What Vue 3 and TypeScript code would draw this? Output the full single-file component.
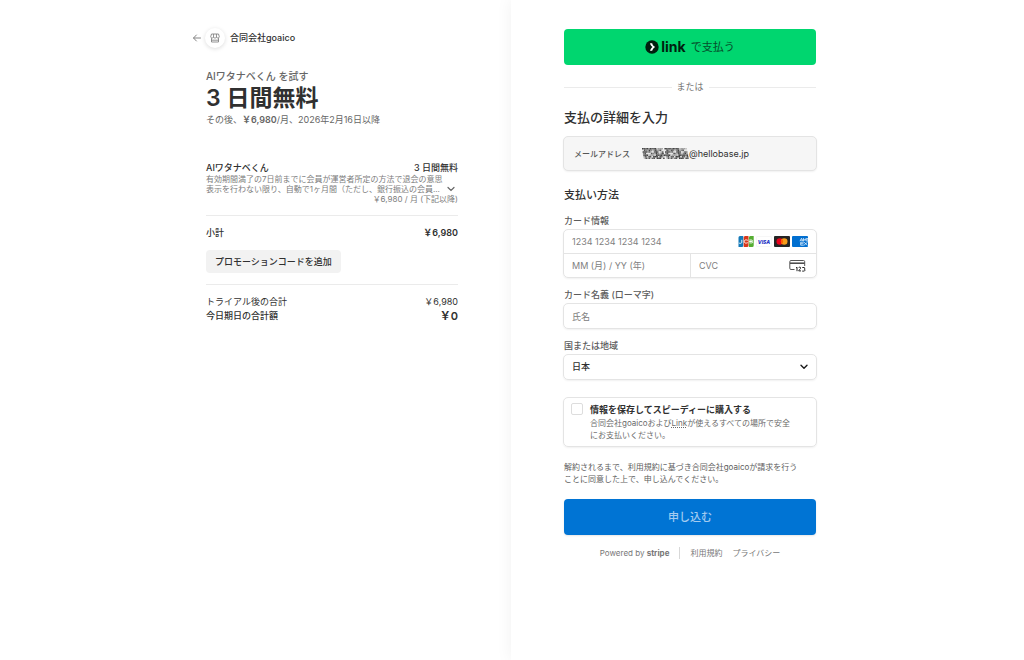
<script setup lang="ts">
import { ref } from 'vue'

const cardNumber = ref('')
const expiry = ref('')
const cvc = ref('')
const holder = ref('')
const country = ref('JP')
const saveInfo = ref(false)

interface Cell {
  x: number
  y: number
  fill: string
}

const shades = ['#444', '#888', '#c4c4c4', '#555', '#a2a2a2', '#e4e4e4', '#666']
const maskCells: Cell[] = []
for (let row = 0; row < 7; row++) {
  for (let col = 0; col < 28; col++) {
    if (col === 13 && row % 3 !== 1) continue
    const index = (col * col * 3 + row * 5 + col * row * 2 + (col >> 1)) % shades.length
    maskCells.push({ x: col * 1.6 + row * 0.3, y: row * 1.6, fill: shades[index] })
  }
}
</script>

<template>
  <main class="checkout">
    <section class="summary">
      <div class="column">
        <header class="merchant">
          <a href="#" class="back" aria-label="戻る">
            <svg width="8" height="8" viewBox="0 0 8 8" fill="none" stroke="#858585" stroke-linecap="round" stroke-linejoin="round">
              <path d="M7.5 4H.6M3.4 1 .5 4l2.9 3" />
            </svg>
          </a>
          <span class="avatar">
            <svg width="10" height="10" viewBox="0 0 10 10" fill="none" stroke="#777" stroke-width=".8">
              <path d="M1.500 1h7l.8 2.700c0 1.600-2.100 1.900-2.800.5-.6 1.200-2.400 1.200-3 0C2.800 5.600.7 5.300.7 3.700zM3.600 1l-.1 3.200M6.400 1l.1 3.200M1.500 5.200V9h7V5.200M1.500 7.200h7" />
            </svg>
          </span>
          <span class="merchant-name">合同会社goaico</span>
        </header>

        <div class="intro">
          <p class="product">AIワタナベくん を試す</p>
          <h1>3 日間無料</h1>
          <p class="after">その後、<b>￥6,980</b>/月、2026年2月16日以降</p>
        </div>

        <div class="item">
          <div class="line strong"><span>AIワタナベくん</span><span>3 日間無料</span></div>
          <div class="details">
            <p>有効期間満了の7日前までに会員が運営者所定の方法で退会の意思<br />表示を行わない限り、自動で1ヶ月間（ただし、銀行振込の会員...</p>
            <button type="button" class="expand" aria-label="詳細を表示">
              <svg width="8" height="6" viewBox="0 0 8 6" fill="none" stroke="#666" stroke-width="1.200" stroke-linecap="round"><path d="m1 1.500 3 3 3-3" /></svg>
            </button>
          </div>
          <p class="recurring">￥6,980 / 月 (下記以降)</p>
        </div>

        <div class="subtotal">
          <div class="line strong"><span>小計</span><span class="amount">￥6,980</span></div>
          <button type="button" class="promo">プロモーションコードを追加</button>
        </div>

        <div class="totals">
          <div class="line"><span>トライアル後の合計</span><span>￥6,980</span></div>
          <div class="line strong"><span>今日期日の合計額</span><span class="amount due">￥0</span></div>
        </div>
      </div>
    </section>

    <section class="payment">
      <form class="column" @submit.prevent>
        <button type="button" class="link-pay">
          <svg width="14" height="14" viewBox="0 0 14 14">
            <circle cx="7" cy="7" r="6.700" fill="#011e0f" />
            <path d="M5 3.200h2.200c.4 1.600 1.300 2.900 3 3.800-1.700.9-2.600 2.200-3 3.800H5c.4-1.600 1.300-2.900 2.500-3.800C6.300 6.100 5.400 4.800 5 3.200z" fill="#fff" />
          </svg>
          <span class="link-word">link</span>
          <span>で支払う</span>
        </button>

        <div class="or"><span>または</span></div>

        <h2>支払の詳細を入力</h2>
        <div class="email">
          <span class="email-label">メールアドレス</span>
          <span class="email-value">
            <svg width="47" height="11" viewBox="0 0 47 11" aria-hidden="true">
              <rect v-for="(cell, i) in maskCells" :key="i" :x="cell.x" :y="cell.y" width="1.7" height="1.7" :fill="cell.fill" />
            </svg>@hellobase.jp
          </span>
        </div>

        <h3>支払い方法</h3>

        <fieldset class="field">
          <legend class="label">カード情報</legend>
          <div class="control card">
            <div class="cell number">
              <input v-model="cardNumber" placeholder="1234 1234 1234 1234" aria-label="カード番号" />
              <div class="brands">
                <svg width="16" height="11" viewBox="0 0 16 11" role="img" aria-label="JCB">
                  <path d="M2 0h3.300v9.500A1.500 1.500 0 0 1 3.800 11H.5V1.500A1.500 1.500 0 0 1 2 0z" fill="#1479b8" />
                  <path d="M7.200 0h3.300v9.500A1.500 1.500 0 0 1 9 11H5.700V1.500A1.500 1.500 0 0 1 7.200 0z" fill="#d9361a" />
                  <path d="M12.400 0h3.300v9.500a1.500 1.500 0 0 1-1.500 1.500h-3.300V1.500A1.500 1.500 0 0 1 12.400 0z" fill="#55ad32" />
                  <path d="M3.800 3.800v2.500c0 1.200-1.700 1.300-3 .7M9.800 4.300c-1.800-.8-3.500-.5-3.500 1.200s1.700 2 3.500 1.200M11.300 4h2.200c1.200 0 1.200 1.400 0 1.400h-2.200 2.500c1.200 0 1.200 1.500 0 1.500h-2.500" fill="none" stroke="#fff" stroke-width=".9" />
                </svg>
                <svg width="16" height="11" viewBox="0 0 16 11" role="img" aria-label="Visa">
                  <rect x=".3" y=".3" width="15.400" height="10.400" rx="1.500" fill="#fff" stroke="#eee" stroke-width=".6" />
                  <text x="8" y="7.600" text-anchor="middle" class="visa">VISA</text>
                </svg>
                <svg width="16" height="11" viewBox="0 0 16 11" role="img" aria-label="Mastercard">
                  <rect width="16" height="11" rx="1" fill="#252525" />
                  <circle cx="5.800" cy="5.500" r="3.300" fill="#eb001b" />
                  <circle cx="10.200" cy="5.500" r="3.300" fill="#f79e1b" />
                  <path d="M8 3.040a3.300 3.300 0 0 1 0 4.920 3.300 3.300 0 0 1 0-4.920z" fill="#ff5f00" />
                </svg>
                <svg width="16" height="11" viewBox="0 0 16 11" role="img" aria-label="American Express">
                  <rect width="16" height="11" rx="1" fill="#016fd0" />
                  <path d="m8 5.200 1.500-3 1.500 3M8.600 4.200h1.900M11.500 5.200V2.400l1.300 2 1.300-2v2.800M11.800 6.200H8.700v3h3.100M8.700 7.700h2.800M12 6.200l3.500 3M15.500 6.200l-3.500 3M14.500 2.500H16M14.500 3.800H16M14.500 5H16" fill="none" stroke="#fff" stroke-width=".7" />
                </svg>
              </div>
            </div>
            <div class="split">
              <div class="cell">
                <input v-model="expiry" placeholder="MM (月) / YY (年)" aria-label="有効期限" />
              </div>
              <div class="cell cvc">
                <input v-model="cvc" placeholder="CVC" aria-label="セキュリティコード" />
                <svg width="17" height="12" viewBox="0 0 17 12" fill="none" aria-hidden="true">
                  <path d="M5.500 9.500H2A1.200 1.200 0 0 1 .8 8.300V1.700A1.200 1.200 0 0 1 2 .5h12.500a1.200 1.200 0 0 1 1.200 1.200v4.300" stroke="#555" />
                  <path d="M1 3.200h14.500" stroke="#444" stroke-width="1.500" />
                  <path d="m7 8 1-.8v4M9.700 7.800c.3-1 2-.9 2 .2 0 .8-1.800 1.800-2 2.900H12M13.300 7.500h1.900c.8 0 .8 1.600-.2 1.600 1.300 0 1.300 2-.1 2h-1.700" stroke="#222" />
                </svg>
              </div>
            </div>
          </div>
        </fieldset>

        <div class="field">
          <label class="label" for="holder">カード名義 (ローマ字)</label>
          <div class="control cell">
            <input id="holder" v-model="holder" placeholder="氏名" />
          </div>
        </div>

        <div class="field">
          <label class="label" for="country">国または地域</label>
          <div class="control cell country">
            <select id="country" v-model="country">
              <option value="JP">日本</option>
            </select>
            <svg width="8" height="6" viewBox="0 0 8 6" fill="none" stroke="#1a1a1a" stroke-width="1.400" stroke-linecap="round" stroke-linejoin="round" aria-hidden="true"><path d="m1 1.200 3 3 3-3" /></svg>
          </div>
        </div>

        <div class="control save">
          <input id="save" v-model="saveInfo" type="checkbox" />
          <div>
            <label for="save">情報を保存してスピーディーに購入する</label>
            <p>合同会社goaicoおよび<a href="#">Link</a>が使えるすべての場所で安全<br />にお支払いください。</p>
          </div>
        </div>

        <p class="terms">解約されるまで、利用規約に基づき合同会社goaicoが請求を行う<br />ことに同意した上で、申し込んでください。</p>

        <button type="submit" class="submit">申し込む</button>

        <footer>
          <a href="#" class="powered">Powered by <b>stripe</b></a>
          <a href="#">利用規約</a>
          <a href="#">プライバシー</a>
        </footer>
      </form>
    </section>
  </main>
</template>

<style>
body {
  margin: 0;
  background: #fff;
}
</style>

<style scoped>
.checkout {
  display: grid;
  grid-template-columns: 1fr 1fr;
  min-height: 100vh;
  overflow: hidden;
  font-family: Inter, "Noto Sans CJK JP", sans-serif;
  font-size: 9px;
  line-height: 14px;
  color: #303030;
}
p, h1, h2, h3, fieldset, legend {
  margin: 0;
  padding: 0;
  border: 0;
}
button, input, select {
  font: inherit;
  color: inherit;
  border: 0;
  padding: 0;
  margin: 0;
  background: none;
}
a {
  color: inherit;
  text-decoration: none;
}
svg {
  display: block;
  flex: none;
}
.column {
  width: 100%;
  max-width: 252px;
}
.summary {
  display: flex;
  justify-content: flex-end;
  padding: 28px 54px 28px 28px;
}
.payment {
  margin-left: -1px;
  padding: 29px 28px 28px 53px;
  background: #fff;
  box-shadow: 0 0 16px rgba(0, 0, 0, 0.06);
}
.merchant {
  display: flex;
  align-items: center;
  gap: 4px;
  margin-left: -13px;
}
.avatar {
  display: grid;
  place-items: center;
  width: 20px;
  height: 20px;
  border-radius: 50%;
  box-shadow: 0 1px 4px rgba(0, 0, 0, 0.14);
}
.merchant-name {
  margin-left: 1px;
  font-weight: 500;
}
.intro {
  margin-top: 20px;
  color: #666;
}
.product {
  font-size: 10px;
  line-height: 16px;
  font-weight: 500;
}
h1 {
  font-size: 23px;
  line-height: 28px;
  font-weight: 600;
  color: #303030;
}
.after {
  line-height: 15px;
}
.after b {
  font-weight: 600;
}
.item {
  margin-top: 34px;
}
.line {
  display: flex;
  justify-content: space-between;
}
.strong {
  font-weight: 500;
}
.amount {
  font-weight: 600;
}
.item .line {
  line-height: 13px;
}
.details {
  display: flex;
  justify-content: space-between;
  align-items: flex-end;
  font-size: 8px;
  line-height: 10px;
  color: #7c7c7c;
  white-space: nowrap;
}
.expand {
  padding: 2px 3px;
}
.recurring {
  font-size: 8px;
  line-height: 11px;
  color: #7c7c7c;
  text-align: right;
}
.subtotal, .totals {
  border-top: 1px solid #ebebeb;
  padding-top: 10px;
}
.subtotal {
  margin-top: 10px;
}
.promo {
  margin: 10px 0 11px;
  height: 23px;
  padding: 0 9px;
  border-radius: 4px;
  background: #f2f2f2;
  font-weight: 500;
}
.due {
  font-size: 11px;
}
.link-pay, .submit {
  display: flex;
  align-items: center;
  justify-content: center;
  width: 100%;
  height: 36px;
  border-radius: 4px;
  font-size: 11px;
}
.link-pay {
  background: #00d66f;
  color: #064d2b;
}
.link-word {
  margin: 0 5px 0 2px;
  font-size: 14px;
  font-weight: 700;
  color: #011e0f;
}
.or {
  display: flex;
  align-items: center;
  gap: 5px;
  margin-top: 15px;
  color: #777;
}
.or::before, .or::after {
  content: "";
  flex: 1;
  height: 1px;
  background: #ebebeb;
}
h2 {
  margin-top: 13px;
  font-size: 13px;
  line-height: 20px;
  font-weight: 500;
}
h3 {
  margin: 16px 0 11px;
  font-size: 11px;
  line-height: 16px;
  font-weight: 500;
}
.email, .control {
  margin-left: -1px;
  margin-right: -1px;
  border: 1px solid #e4e4e4;
  border-radius: 5px;
  box-shadow: 0 1px 2px rgba(0, 0, 0, 0.06);
}
.email {
  display: flex;
  align-items: center;
  gap: 12px;
  height: 33px;
  margin-top: 9px;
  padding: 0 10px;
  background: #f6f6f6;
}
.email-label {
  font-size: 8px;
  font-weight: 500;
  color: #555;
}
.email-value {
  display: flex;
  align-items: center;
}
.label {
  display: block;
  line-height: 14px;
  margin-bottom: 1px;
  font-weight: 500;
  color: #5c5c5c;
}
.field {
  margin-bottom: 10px;
}
.cell {
  display: flex;
  align-items: center;
  height: 24px;
  padding: 0 8px;
}
.cell input, .cell select {
  flex: 1;
  min-width: 0;
  width: 100%;
  height: 100%;
  outline: 0;
}
.cell input::placeholder {
  color: #808080;
  opacity: 1;
}
.card .cell {
  height: 23px;
}
.brands {
  display: flex;
  gap: 2px;
}
.visa {
  font-size: 5px;
  font-weight: 800;
  font-style: italic;
  fill: #2130c4;
}
.split {
  display: grid;
  grid-template-columns: 1fr 1fr;
  border-top: 1px solid #e4e4e4;
}
.cvc {
  border-left: 1px solid #e4e4e4;
}
.cvc svg {
  margin-right: 2px;
}
.country select {
  appearance: none;
  font-weight: 500;
}
.save {
  display: flex;
  gap: 7px;
  margin-top: 17px;
  padding: 5px 7px 5px;
}
.save input {
  flex: none;
  appearance: none;
  width: 12px;
  height: 12px;
  border: 1px solid #ddd;
  border-radius: 2px;
}
.save input:checked {
  background: #0074d4;
}
.save label {
  display: block;
  margin-bottom: 1px;
  line-height: 13px;
  font-weight: 600;
}
.save p {
  font-size: 8px;
  line-height: 12px;
  color: #6b6b6b;
}
.save a {
  text-decoration: underline dotted;
}
.terms {
  margin: 14px 0;
  font-size: 8px;
  line-height: 12px;
  color: #606060;
}
.submit {
  background: #0074d4;
  color: #a3cbf0;
  font-weight: 500;
  box-shadow: 0 1px 2px rgba(0, 0, 0, 0.1);
}
footer {
  display: flex;
  align-items: center;
  justify-content: center;
  gap: 10px;
  margin-top: 12px;
  font-size: 8px;
  line-height: 12px;
  color: #777;
}
.powered {
  padding-right: 10px;
  border-right: 1px solid #d8d8d8;
}
</style>
